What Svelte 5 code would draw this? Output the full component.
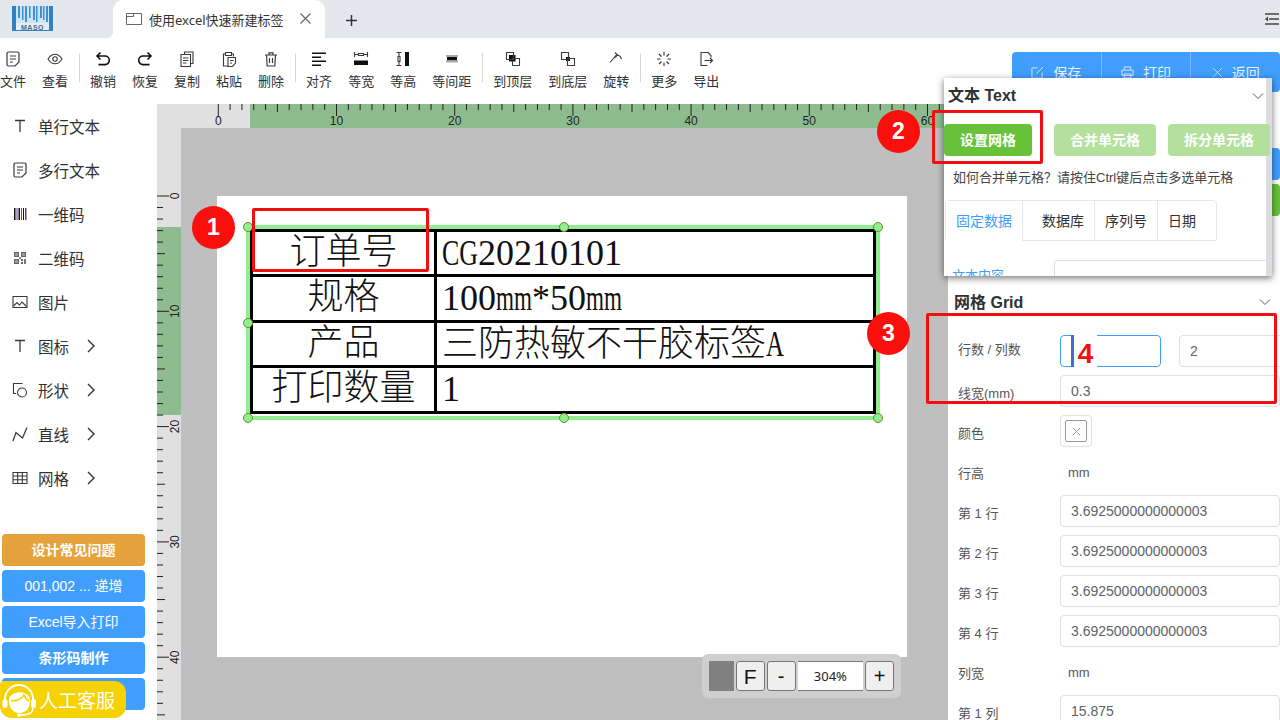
<script>
  const icons = {
    file: { s: ['M3.500 1h9A1.500 1.500 0 0 1 14 2.500V11l-4 4H3.500A1.500 1.500 0 0 1 2 13.500v-11A1.500 1.500 0 0 1 3.500 1z', 'M5 5h6M5 8h6M5 11h3'], w: 1.200 },
    eye: { s: ['M1 8c2-3.300 4.500-4.800 7-4.800s5 1.500 7 4.800c-2 3.300-4.500 4.800-7 4.800S3 11.300 1 8z', 'M8 5.800a2.200 2.200 0 1 0 0 4.400 2.200 2.200 0 0 0 0-4.400z'] },
    undo: { s: ['M5.500 1.500 2 5l3.500 3.500M2 5h8a4.300 4.300 0 0 1 0 8.600H3.500'], w: 1.600, dark: true },
    redo: { s: ['M10.500 1.500 14 5l-3.500 3.500M14 5H6a4.300 4.300 0 0 0 0 8.600h6.500'], w: 1.600, dark: true },
    copy: { s: ['M5.500 3V1h8.500v11.500h-2.500', 'M2 3.500h9.500v12H2z', 'M4 7h5.500M4 9.500h5.500M4 12h3.500'] },
    paste: { s: ['M4.500 3H2.500v12H7', 'M10.500 3h2v2.500', 'M4.500 1.500h6v3h-6z', 'M7 6.500h7.500V12l-3 3.500H7z', 'M9 9.500h3.500M9 12h2'] },
    trash: { s: ['M2 4h12M6 4V1.800h4V4M3.500 4l.7 11h7.600l.7-11M6.500 7v5M9.500 7v5'], w: 1.200 },
    align: { f: [[1, 1.500, 14, 1.500], [1, 5.500, 9, 1.500], [1, 9.500, 14, 1.500], [1, 13.500, 9, 1.500]] },
    eqwidth: { s: ['M1.500 1v5M14.500 1v5M1.500 3.500h4M10.500 3.500h4', 'M5.500 2.500h5v2h-5z'], f: [[1, 9.500, 14, 4.500]] },
    eqheight: { s: ['M1.500 1.500h5M1.500 14.500h5M4 1.500v4M4 10.500v4', 'M3 5.500h2v5H3z'], f: [[10, 1, 4, 14]] },
    eqspace: { f: [[2, 4, 12, 2, '#aaa'], [3, 6, 10, 3.500], [2, 9.500, 12, 2, '#aaa']] },
    front: { s: ['M1.500 1.500h7v7h-7z', 'M7.500 7.500h7v7h-7z'], f: [[4, 4, 6.500, 6.500]] },
    back: { s: ['M1.500 1.500h7v7h-7z', 'M7.500 7.500h7v7h-7z'], f: [[6, 6, 4, 4]] },
    rotate: { s: ['M2 11.500 8 4.500c2.500-.8 4.500.6 5.500 3.500', 'M7 1.500 9.500 4 7 6.500'] },
    more: { s: ['M8 1v3.500M8 11.500V15M1 8h3.500M11.500 8H15M3 3l2.500 2.500M10.500 10.500 13 13M13 3l-2.500 2.500M5.500 10.500 3 13'], w: 1.200 },
    export: { s: ['M9.500 14.500H3v-13h7l3 3v2', 'M6.500 9.500h8M12 7l2.500 2.500L12 12'] },
    text: { s: ['M3 2.500h10M8 2.500V14'], w: 1.300 },
    barcode: { f: [[2, 2, 1.500, 12], [4.500, 2, 1, 12, '#5a3f8c'], [6.500, 2, 1.500, 12], [9, 2, 1, 12, '#8c3f5a'], [11, 2, 1, 12], [13, 2, 1.500, 12, '#5a3f8c']] },
    qr: { f: [[2, 2, 5, 5, '#666'], [3, 3, 3, 3, '#999'], [9, 2, 5, 5, '#666'], [10, 3, 3, 3, '#999'], [2, 9, 5, 5, '#666'], [3, 10, 3, 3, '#999'], [9, 9, 2, 2, '#666'], [12, 9, 2, 5, '#777'], [9, 12, 2, 2, '#666'], [7, 7, 2, 2, '#888']] },
    image: { s: ['M1 2.500h14v11H1z', 'M1.500 12 5 8.500l2.500 2.500L10 8l4.500 4.500'] },
    shape: { s: ['M10.500 1.500h-9v10H4', 'M10 6a4.500 4.500 0 1 0 0 9 4.500 4.500 0 0 0 0-9z'] },
    line: { s: ['M1 15 4 6.500l6.500 5.500L15 1.500'], w: 1.300 },
    grid: { s: ['M1 2.500h14v11H1zM1 6h14M1 9.800h14M5.700 2.500v11M10.300 2.500v11'] }
  };

  const toolGroups = [
    [['文件', 'file'], ['查看', 'eye']],
    [['撤销', 'undo'], ['恢复', 'redo'], ['复制', 'copy'], ['粘贴', 'paste'], ['删除', 'trash']],
    [['对齐', 'align'], ['等宽', 'eqwidth'], ['等高', 'eqheight'], ['等间距', 'eqspace']],
    [['到顶层', 'front'], ['到底层', 'back'], ['旋转', 'rotate']],
    [['更多', 'more'], ['导出', 'export']]
  ];

  const menu = [
    ['单行文本', 'text', false],
    ['多行文本', 'file', false],
    ['一维码', 'barcode', false],
    ['二维码', 'qr', false],
    ['图片', 'image', false],
    ['图标', 'text', true],
    ['形状', 'shape', true],
    ['直线', 'line', true],
    ['网格', 'grid', true]
  ];

  const shortcuts = ['001,002 ... 递增', 'Excel导入打印', '条形码制作', ''];

  const rowHeights = ['第 1 行', '第 2 行', '第 3 行', '第 4 行'];

  const mmX = 11.82;
  const mmY = 11.53;
  const topTicks = Array.from({ length: 62 }, (_, i) => i);
  const leftTicks = Array.from({ length: 46 }, (_, i) => i);
  const tickLen = (i) => (i % 10 === 0 ? 12 : i % 5 === 0 ? 8 : 6);

  // selection handles, relative to the label page
  const handles = [
    [31, 31], [347, 31], [661, 31],
    [31, 127], [661, 127],
    [31, 222], [347, 222], [661, 222]
  ];
</script>

{#snippet icon(name)}
  <svg class="icon" viewBox="0 0 16 16" width="16" height="16" aria-hidden="true">
    {#each icons[name].f ?? [] as r}
      <rect x={r[0]} y={r[1]} width={r[2]} height={r[3]} fill={r[4] ?? '#111'} />
    {/each}
    {#each icons[name].s ?? [] as d}
      <path {d} fill="none" stroke={icons[name].dark ? '#111' : '#3a3a3a'} stroke-width={icons[name].w ?? 1.1} />
    {/each}
  </svg>
{/snippet}

{#snippet chevron()}
  <svg class="chev" viewBox="0 0 12 8" width="12" height="8" aria-hidden="true">
    <path d="M1 1.500 6 6.500l5-5" fill="none" stroke="#555" stroke-width="1" />
  </svg>
{/snippet}

<div class="app">
  <header class="tabbar">
    <svg class="logo" viewBox="0 0 41 25" width="41" height="25" aria-label="MASO">
      <rect width="41" height="25" fill="#2f83c5" />
      <rect x="4" y="0" width="33" height="17" fill="#cfe4f4" />
      {#each [6, 10, 13, 17, 21, 24, 28, 31, 34] as x, i}
        <rect {x} y="0" width={i % 2 ? 1.500 : 2} height={12 + (i % 3) * 2} fill="#3f92d2" />
      {/each}
      <rect x="4" y="17" width="33" height="7" fill="#e3eef7" />
      <text x="20.500" y="23.500" text-anchor="middle" class="logo-text">MASO</text>
    </svg>
    <div class="tab">
      <svg viewBox="0 0 16 12" width="16" height="12" aria-hidden="true">
        <path d="M.5.500h15v11H.5zM.5 3.500h7V.500" fill="none" stroke="#666" />
      </svg>
      <span class="tab-title">使用excel快速新建标签</span>
      <svg class="tab-close" viewBox="0 0 11 11" width="11" height="11" aria-hidden="true">
        <path d="M.5.500l10 10M10.500.500l-10 10" stroke="#666" stroke-width="1.200" />
      </svg>
    </div>
    <svg class="tab-add" viewBox="0 0 11 11" width="11" height="11" aria-hidden="true">
      <path d="M5.500 0v11M0 5.500h11" stroke="#333" stroke-width="1.500" />
    </svg>
    <svg class="collapse" viewBox="0 0 14 12" width="14" height="12" aria-hidden="true">
      <path d="M0 1h14M0 11h14M4 6h10" stroke="#444" stroke-width="1.600" />
      <path d="M0 6l3-2.500v5z" fill="#444" />
    </svg>
  </header>

  <div class="toolbar">
    <div class="tools">
      {#each toolGroups as group, g}
        {#if g > 0}<span class="sep"></span>{/if}
        {#each group as [label, name]}
          <button type="button" class="tool">
            {@render icon(name)}
            <span>{label}</span>
          </button>
        {/each}
      {/each}
    </div>
    <div class="actions">
      <button type="button">
        <svg viewBox="0 0 14 14" width="13" height="13" aria-hidden="true"><path d="M7 2H1v11h11V7M6 8l7-7" fill="none" stroke="#d8ebff" /></svg>
        保存
      </button>
      <button type="button">
        <svg viewBox="0 0 14 14" width="13" height="13" aria-hidden="true"><path d="M3.500 4V1h7v3M1 4.500h12V10H1zM3.500 8.500h7V13h-7z" fill="none" stroke="#d8ebff" /></svg>
        打印
      </button>
      <button type="button">
        <svg viewBox="0 0 14 14" width="11" height="11" aria-hidden="true"><path d="M1 1l12 12M13 1 1 13" stroke="#d8ebff" /></svg>
        返回
      </button>
    </div>
  </div>

  <div class="workspace">
    <aside class="sidebar">
      <nav class="menu">
        {#each menu as [label, name, more]}
          <div class="menu-item">
            {@render icon(name)}
            <span>{label}</span>
            {#if more}
              <svg class="menu-arrow" viewBox="0 0 8 14" width="8" height="14" aria-hidden="true">
                <path d="M1 1l6 6-6 6" fill="none" stroke="#303133" stroke-width="1.400" />
              </svg>
            {/if}
          </div>
        {/each}
      </nav>
      <div class="shortcuts">
        <button type="button" class="warn">设计常见问题</button>
        {#each shortcuts as label}
          <button type="button" class={label.startsWith('Excel') || label.startsWith('001') ? 'plain' : ''}>{label}</button>
        {/each}
      </div>
    </aside>

    <main class="stage">
      <svg class="ruler-top" width="791" height="24" aria-hidden="true">
        <rect x="93" width="698" height="24" fill="#8fbc8f" />
        {#each topTicks as i}
          <line x1={61.3 + i * mmX} x2={61.3 + i * mmX} y1="0" y2={tickLen(i)} stroke="#222" />
          {#if i % 10 === 0}
            <text x={61.3 + i * mmX} y="21" text-anchor="middle">{i}</text>
          {/if}
        {/each}
      </svg>
      <div class="stage-body">
        <svg class="ruler-left" width="24" height="592" aria-hidden="true">
          <rect y="99" width="24" height="188" fill="#8fbc8f" />
          {#each leftTicks as i}
            <line x1="0" x2={tickLen(i)} y1={68 + i * mmY} y2={68 + i * mmY} stroke="#222" />
            {#if i % 10 === 0}
              <text x="22" y={68 + i * mmY} text-anchor="middle" transform={`rotate(-90 22 ${68 + i * mmY})`}>{i}</text>
            {/if}
          {/each}
        </svg>
        <div class="canvas">
          <div class="page">
            <div class="selection"></div>
            <table class="label">
              <tbody>
                <tr>
                  <td class="name"><div>订单号</div></td>
                  <td class="value"><div><span class="cg">CG</span>20210101</div></td>
                </tr>
                <tr>
                  <td class="name"><div>规格</div></td>
                  <td class="value"><div>100<span class="mm">mm</span>*50<span class="mm">mm</span></div></td>
                </tr>
                <tr>
                  <td class="name"><div>产品</div></td>
                  <td class="value cjk"><div>三防热敏不干胶标签<span class="a">A</span></div></td>
                </tr>
                <tr>
                  <td class="name"><div>打印数量</div></td>
                  <td class="value"><div>1</div></td>
                </tr>
              </tbody>
            </table>
            {#each handles as [x, y]}
              <span class="handle" style={`left:${x - 5}px;top:${y - 5}px`}></span>
            {/each}
          </div>
        </div>
      </div>

      <div class="zoom">
        <span class="swatch"></span>
        <button type="button" class="f">F</button>
        <button type="button">-</button>
        <span class="pct">304%</span>
        <button type="button">+</button>
      </div>
    </main>

    <aside class="panel">
      <div class="hidden-btn blue"></div>
      <div class="hidden-btn green"></div>
      <h3 class="panel-head">网格 Grid {@render chevron()}</h3>
      <div class="form">
        <div class="row">
          <label for="rows">行数 / 列数</label>
          <input id="rows" class="focus half" value="" />
          <input class="half over" value="2" />
        </div>
        <div class="row low">
          <label for="lw">线宽(mm)</label>
          <input id="lw" value="0.3" />
        </div>
        <div class="row low">
          <span class="lbl">颜色</span>
          <span class="color"><span><svg viewBox="0 0 10 10" width="9" height="9" aria-hidden="true"><path d="M1 1l8 8M9 1 1 9" stroke="#999" /></svg></span></span>
        </div>
        <div class="row low"><span class="lbl">行高</span><span class="unit">mm</span></div>
        {#each rowHeights as r}
          <div class="row low">
            <span class="lbl">{r}</span>
            <input value="3.6925000000000003" />
          </div>
        {/each}
        <div class="row low"><span class="lbl">列宽</span><span class="unit">mm</span></div>
        <div class="row low">
          <span class="lbl">第 1 列</span>
          <input value="15.875" />
        </div>
      </div>
    </aside>
  </div>

  <section class="popup">
    <h3 class="popup-head">文本 Text {@render chevron()}</h3>
    <div class="popup-btns">
      <button type="button" class="primary">设置网格</button>
      <button type="button" class="muted first">合并单元格</button>
      <button type="button" class="muted">拆分单元格</button>
    </div>
    <p class="hint">如何合并单元格？请按住Ctrl键后点击多选单元格</p>
    <div class="tabs">
      <span class="active">固定数据</span>
      <span>数据库</span>
      <span>序列号</span>
      <span>日期</span>
    </div>
    <div class="content-row">
      <span>文本内容</span>
      <div class="content-box"></div>
    </div>
  </section>

  <div class="mark" style="left:252px;top:208px;width:177px;height:64px"></div>
  <div class="mark" style="left:932px;top:110px;width:111px;height:54px"></div>
  <div class="mark" style="left:926px;top:313px;width:351px;height:91px"></div>
  <span class="dot" style="left:192px;top:206px">1</span>
  <span class="dot" style="left:877px;top:110px">2</span>
  <span class="dot" style="left:867px;top:312px">3</span>
  <span class="caret"></span>
  <span class="four">4</span>

  <div class="service">
    <svg viewBox="0 0 36 36" width="36" height="36" aria-hidden="true">
      <path d="M4 21V17a14 14 0 0 1 28 0v4" fill="none" stroke="#fff" stroke-width="2" />
      <path d="M8 17c1-8 19-10 21 0 .5 9-4 14-10.500 14S7.500 26 8 17z" fill="#fff" />
      <path d="M10 19c5 0 11-2 13-6 1 3 3 5 5 6" fill="none" stroke="#f5d200" stroke-width="1.600" />
      <rect x="1.500" y="17" width="5" height="9" rx="2.500" fill="#fff" />
      <rect x="30" y="17" width="5" height="9" rx="2.500" fill="#fff" />
      <path d="M32 26c0 5-5 7-12 7" fill="none" stroke="#fff" stroke-width="1.600" />
      <circle cx="18" cy="33" r="2" fill="#fff" />
    </svg>
    <span>人工客服</span>
  </div>
</div>

<style>
  :global(body) {
    margin: 0;
  }

  .app {
    position: relative;
    width: 1280px;
    height: 720px;
    overflow: hidden;
    display: flex;
    flex-direction: column;
    background: #fff;
    color: #303133;
    font-family: "Liberation Sans", "Noto Sans CJK SC", sans-serif;
    font-size: 13px;
  }

  button {
    font-family: inherit;
    border: 0;
    padding: 0;
    background: none;
    color: inherit;
  }

  .tabbar {
    height: 38px;
    flex: none;
    display: flex;
    align-items: center;
    background: #e4e7eb;
    padding: 0 1px 0 12px;
  }

  .logo {
    margin: -1px 60px 0 0;
  }

  .logo-text {
    font: bold 7px "Liberation Sans", sans-serif;
    fill: #4a6a85;
    letter-spacing: 0.5px;
  }

  .tab {
    position: relative;
    align-self: flex-end;
    width: 212px;
    height: 38px;
    box-sizing: border-box;
    padding: 0 14px 0 13px;
    display: flex;
    align-items: center;
    background: #fff;
    border-radius: 10px 10px 0 0;
    color: #333;
  }

  .tab::before {
    content: "";
    position: absolute;
    left: -6px;
    bottom: 0;
    width: 6px;
    height: 6px;
    background: radial-gradient(circle at 0 0, transparent 6px, #fff 6px);
  }

  .tab-title {
    margin-left: 7px;
    font-family: "Noto Sans", "Noto Sans CJK SC", sans-serif;
    font-size: 13px;
    white-space: nowrap;
  }

  .tab-close {
    margin-left: auto;
    margin-top: -1px;
  }

  .tab-add {
    margin: 2px 0 0 21px;
  }

  .collapse {
    margin-left: auto;
  }

  .toolbar {
    height: 66px;
    flex: none;
    display: flex;
    justify-content: space-between;
    background: #fff;
  }

  .tools {
    display: flex;
    align-items: flex-start;
    margin-left: -8px;
  }

  .tool {
    padding: 13px 8px 0;
    display: flex;
    flex-direction: column;
    align-items: center;
    font-size: 13px;
    line-height: 18px;
    white-space: nowrap;
    color: #303133;
  }

  .tool span {
    margin-top: 6px;
  }

  .icon {
    display: block;
    flex: none;
  }

  .sep {
    width: 1px;
    height: 29px;
    margin: 15px 2.5px 0;
    background: #d8d8d8;
  }

  .actions {
    display: flex;
    margin-top: 14px;
    height: 40px;
    width: 268px;
  }

  .actions button {
    flex: 1;
    display: flex;
    align-items: center;
    justify-content: center;
    gap: 9px;
    background: #409eff;
    color: #e6f2ff;
    font-size: 14px;
    border-right: 1px solid #79bbff;
  }

  .actions button:first-child {
    border-radius: 4px 0 0 4px;
  }

  .actions button:last-child {
    border-right: 0;
    border-radius: 0 4px 4px 0;
  }

  .workspace {
    flex: 1;
    display: flex;
    min-height: 0;
  }

  .sidebar {
    width: 157px;
    flex: none;
    box-sizing: border-box;
    display: flex;
    flex-direction: column;
    justify-content: space-between;
    padding: 0 12px 10px 2px;
  }

  .menu-item {
    height: 44px;
    display: flex;
    align-items: center;
    padding-left: 10px;
    font-size: 15.5px;
    color: #303133;
  }

  .menu-item span {
    margin-left: 10px;
  }

  .menu-arrow {
    margin-left: 18px;
  }

  .shortcuts {
    display: flex;
    flex-direction: column;
    gap: 4px;
  }

  .shortcuts button {
    height: 32px;
    padding-bottom: 2px;
    border-radius: 4px;
    background: #409eff;
    color: #fff;
    font-size: 14px;
    font-weight: bold;
  }

  .shortcuts button.plain {
    font-weight: normal;
  }

  .shortcuts button.warn {
    background: #e6a23c;
  }

  .stage {
    position: relative;
    flex: 1;
    min-width: 0;
    display: flex;
    flex-direction: column;
    background: #e0e0e0;
  }

  .ruler-top,
  .ruler-left {
    display: block;
    flex: none;
  }

  .ruler-top text,
  .ruler-left text {
    font: 12px "Liberation Sans", sans-serif;
    fill: #222;
  }

  .stage-body {
    flex: 1;
    display: flex;
    min-height: 0;
  }

  .canvas {
    flex: 1;
    box-sizing: border-box;
    padding: 68px 0 0 36px;
    background: #bfbfbf;
  }

  .page {
    position: relative;
    width: 690px;
    height: 461px;
    background: #fff;
  }

  .selection {
    position: absolute;
    left: 29px;
    top: 28.500px;
    width: 634px;
    height: 195.500px;
    box-sizing: border-box;
    border: 4.500px solid #90ee90;
  }

  .label {
    position: absolute;
    left: 33px;
    top: 32.500px;
    width: 626px;
    table-layout: fixed;
    border-collapse: collapse;
    background: #fff;
    color: #111;
    font-size: 36px;
  }

  .label td {
    border: 3px solid #000;
    padding: 0;
    white-space: nowrap;
  }

  .label td > div {
    height: 42.500px;
  }

  .name {
    width: 181px;
    text-align: center;
    font-family: "Noto Sans CJK SC", sans-serif;
    font-weight: 300;
    line-height: 33px;
  }

  .value {
    padding-left: 5px !important;
    font-family: "Liberation Serif", serif;
    line-height: 43px;
  }

  .value.cjk {
    font-family: "Liberation Serif", "Noto Sans CJK SC", sans-serif;
    font-weight: 300;
    line-height: 42px;
  }

  /* the label font is half-width for latin, these runs are pulled in to match */
  .cg,
  .mm,
  .a {
    display: inline-block;
    transform-origin: left center;
  }

  .cg {
    transform: scaleX(0.72);
    margin-right: -14px;
  }

  .mm {
    transform: scaleX(0.643);
    margin-right: -20px;
  }

  .a {
    transform: scaleX(0.69);
  }

  .handle {
    position: absolute;
    width: 10px;
    height: 10px;
    box-sizing: border-box;
    border: 1px solid #6b8e23;
    border-radius: 50%;
    background: #90ee90;
  }

  .zoom {
    position: absolute;
    left: 545px;
    top: 550px;
    box-sizing: border-box;
    width: 199px;
    height: 44px;
    padding: 7px;
    display: flex;
    gap: 2px;
    background: #cfcfcf;
    border-radius: 6px;
  }

  .swatch {
    width: 25px;
    background: #808080;
  }

  .zoom button {
    width: 29px;
    box-sizing: border-box;
    border: 1px solid #767676;
    border-radius: 3px;
    background: #efefef;
    color: #111;
    font-size: 20px;
    line-height: 1;
  }

  .zoom button.f {
    font-size: 21px;
  }

  .pct {
    width: 66px;
    box-sizing: border-box;
    background: #fff;
    border-bottom: 1px solid #767676;
    border-top: 1px solid #767676;
    text-align: center;
    line-height: 28px;
    font-family: "Noto Sans", sans-serif;
    font-size: 13px;
    color: #222;
  }

  .panel {
    width: 332px;
    flex: none;
    box-sizing: border-box;
    padding-top: 44px;
    overflow: hidden;
    background: #fff;
  }

  .hidden-btn {
    height: 32px;
    border-radius: 4px;
    margin-bottom: 4px;
  }

  .hidden-btn.blue {
    background: #409eff;
  }

  .hidden-btn.green {
    background: #67c23a;
  }

  .panel-head {
    position: relative;
    margin: 77px 0 22px;
    padding-left: 6px;
    font-size: 16px;
    line-height: 20px;
    font-weight: bold;
    color: #303133;
  }

  .panel-head .chev {
    position: absolute;
    right: 9px;
    top: 5px;
  }

  .form {
    padding-left: 10px;
  }

  .row {
    display: flex;
    align-items: center;
    height: 32px;
    margin-bottom: 8px;
    color: #606266;
    white-space: nowrap;
  }

  .row label,
  .lbl {
    width: 102px;
    flex: none;
    font-size: 13px;
    color: #555;
  }

  .row:first-child label {
    margin-top: -6px;
  }

  .row.low label,
  .row.low .lbl {
    padding-top: 4px;
    box-sizing: border-box;
    height: 22px;
    line-height: 20px;
  }

  .row input {
    width: 220px;
    height: 32px;
    flex: none;
    box-sizing: border-box;
    padding: 0 10px;
    border: 1px solid #dcdfe6;
    border-radius: 4px;
    font: 14px "Liberation Sans", sans-serif;
    color: #606266;
    outline: none;
  }

  .row input.half {
    width: 101px;
  }

  .row input.focus {
    border-color: #409eff;
    margin-right: 18px;
  }

  .row input.over {
    width: 120px;
  }

  .unit {
    margin: 3px 0 0 8px;
    font-size: 13px;
    color: #555;
  }

  .color {
    width: 32px;
    height: 32px;
    box-sizing: border-box;
    border: 1px solid #dcdfe6;
    border-radius: 4px;
    padding: 4px;
  }

  .color span {
    height: 100%;
    display: flex;
    align-items: center;
    justify-content: center;
    box-sizing: border-box;
    border: 1px solid #999;
    border-radius: 2px;
  }

  .popup {
    position: absolute;
    left: 944px;
    top: 78px;
    width: 328px;
    height: 198px;
    overflow: hidden;
    background: linear-gradient(to left, #dcdde0 6px, #fff 6px);
    box-shadow: 0 2px 7px rgba(0, 0, 0, 0.55);
  }

  .popup-head {
    position: relative;
    margin: 0;
    height: 34px;
    padding-left: 4px;
    font-size: 16px;
    line-height: 35px;
    font-weight: bold;
    color: #303133;
  }

  .popup-head .chev {
    position: absolute;
    right: 8px;
    top: 14px;
  }

  .popup-btns {
    display: flex;
    margin-top: 12px;
    width: 340px;
  }

  .popup-btns button {
    height: 32px;
    width: 102px;
    padding-bottom: 2px;
    border-radius: 4px;
    color: #fff;
    font-size: 14px;
    font-weight: bold;
  }

  .primary {
    width: 88px !important;
    background: #67c23a;
  }

  .muted {
    margin-left: 12px;
    background: #b3e19d;
  }

  .muted.first {
    margin-left: 22px;
  }

  .hint {
    margin: 13px 0 0 9px;
    font-size: 13px;
    line-height: 18px;
    color: #444;
    white-space: nowrap;
  }

  .tabs {
    display: flex;
    width: 272px;
    margin: 13px 0 0 1px;
    height: 41px;
    box-sizing: border-box;
    border: 1px solid #e4e7ed;
    border-radius: 4px 4px 0 0;
    font-size: 14px;
    line-height: 41px;
    color: #303133;
  }

  .tabs span {
    padding: 0 10px;
    border-left: 1px solid #e4e7ed;
  }

  .tabs span:nth-child(2) {
    padding-left: 19px;
    border-left: 0;
  }

  .tabs .active {
    border-left: 0;
    border-right: 1px solid #e4e7ed;
    height: 40px;
    background: #fff;
    color: #409eff;
  }

  .content-row {
    display: flex;
    margin: 19px 0 0 8px;
    font-size: 13px;
    color: #409eff;
    line-height: 32px;
  }

  .content-box {
    margin-left: 50px;
    flex: 1;
    height: 32px;
    border: 1px solid #dcdfe6;
    border-right: 0;
    border-radius: 4px 0 0 4px;
  }

  .mark {
    position: absolute;
    box-sizing: border-box;
    border: 3px solid #f01010;
    border-radius: 2px;
  }

  .dot {
    position: absolute;
    width: 43px;
    height: 43px;
    border-radius: 50%;
    background: #fb0f0c;
    color: #fff;
    font-size: 23px;
    font-weight: bold;
    line-height: 43px;
    text-align: center;
  }

  .caret {
    position: absolute;
    left: 1071px;
    top: 335px;
    width: 3px;
    height: 32px;
    background: #3f6fce;
  }

  .four {
    position: absolute;
    left: 1074px;
    top: 335px;
    width: 23px;
    height: 32px;
    background: #fff;
    color: #f01010;
    font-size: 28px;
    font-weight: bold;
    line-height: 37px;
    text-align: center;
  }

  .service {
    position: absolute;
    left: 0;
    top: 681px;
    width: 126px;
    height: 37px;
    display: flex;
    align-items: center;
    background: #f5d200;
    border-radius: 4px 12px 12px 12px;
    color: #fff;
    font-size: 19px;
    white-space: nowrap;
  }

  .service svg {
    flex: none;
    margin: 0 2px 0 1px;
  }
</style>
